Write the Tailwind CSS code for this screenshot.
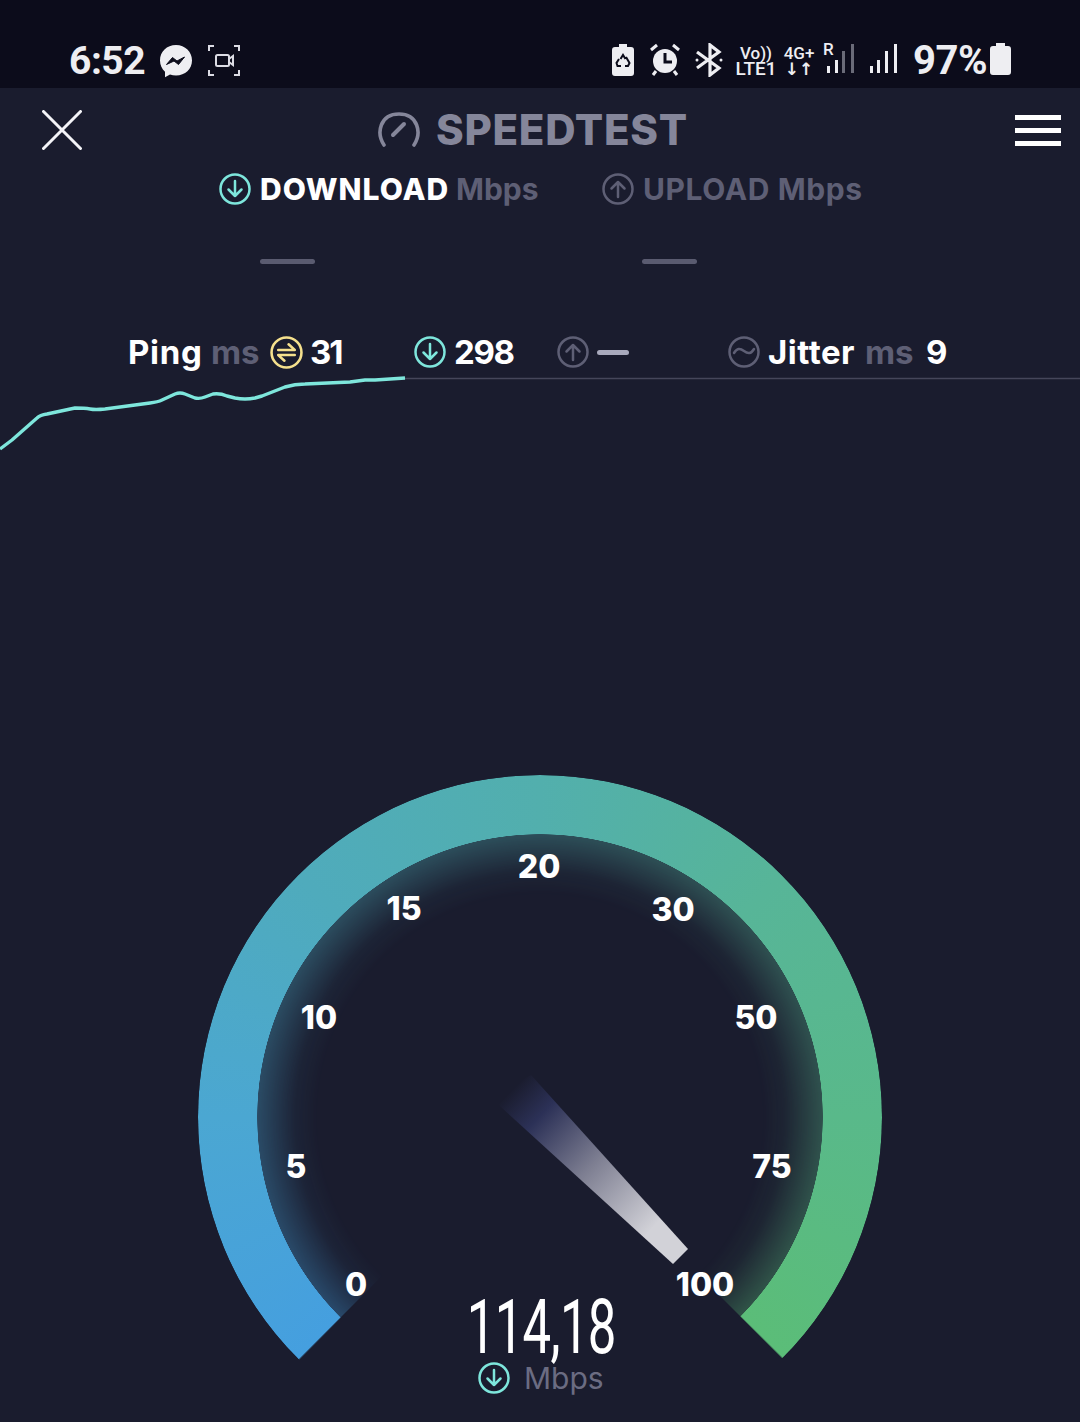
<!DOCTYPE html>
<html><head><meta charset="utf-8"><script src="https://cdn.jsdelivr.net/npm/@tailwindcss/browser@4"></script></head>
<body class="bg-[#1a1c2e]">
<div class="w-[1080px] h-[1422px] overflow-hidden bg-[#1a1c2e] font-['Inter','Liberation_Sans',sans-serif] text-white flex flex-col">
  <!-- status bar -->
  <div class="h-[88px] shrink-0 bg-[#0c0c1b] flex items-end pb-[5px] pl-[69px] text-[#eeeef2] font-['Roboto',sans-serif]">
    <span class="text-[39px] leading-[44px] font-bold w-[75px] whitespace-nowrap tracking-[-0.5px]">6:52</span>
    <svg class="ml-[14px] mb-[4px]" width="36" height="36" viewBox="0 0 36 36"><path d="M18 2C8.800 2 2 8.600 2 17.400c0 4.600 1.900 8.600 5 11.300v5.500l5-2.700c1.900.6 3.900.9 6 .9 9.200 0 16-6.600 16-15S27.200 2 18 2z" fill="#eeeef2"/><path d="M8.500 21.500 14.500 14.500 19 18 26.500 14 20.500 21.500 16 18z" fill="#0c0c1b" stroke="#0c0c1b" stroke-width="1"/></svg>
    <svg class="ml-[13px] mb-[6px]" width="34" height="33" viewBox="0 0 34 33" fill="none" stroke="#dcdce4" stroke-width="2"><path d="M2 7V2h5M27 2h5v5M32 26v5h-5M7 31H2v-5"/><rect x="9" y="11" width="13" height="11" rx="1.500"/><path d="M22 15l4-3v9l-4-3" /></svg>
    <svg class="ml-[370px] mb-[7px]" width="24" height="33" viewBox="0 0 24 33"><path d="M8 1h8v3h4a3 3 0 0 1 3 3v23a3 3 0 0 1-3 3H4a3 3 0 0 1-3-3V7a3 3 0 0 1 3-3h4z" fill="#eeeef2"/><path d="M9.500 16l2.500-4 2.500 4M15 14l3.500 6-1.500 3h-3M10 23H6.500L5.500 20l2.500-4" fill="none" stroke="#0c0c1b" stroke-width="2"/></svg>
    <svg class="ml-[13px] mb-[7px]" width="34" height="33" viewBox="0 0 34 33"><circle cx="17" cy="18" r="12" fill="#eeeef2"/><path d="M17 10v9h7" fill="none" stroke="#0c0c1b" stroke-width="3"/><path d="M3 7l6-5M31 7l-6-5M8 28l-3 4M26 28l3 4" stroke="#eeeef2" stroke-width="3" fill="none"/></svg>
    <svg class="ml-[12px] mb-[6px]" width="30" height="34" viewBox="0 0 30 34" fill="none" stroke="#eeeef2" stroke-width="3.200"><path d="M3 9l22 16-9 7V2l9 7L3 25"/><circle cx="3" cy="17" r="1.500" fill="#eeeef2" stroke="none"/><circle cx="27" cy="17" r="1.500" fill="#eeeef2" stroke="none"/></svg>
    <div class="ml-[11px] mb-[6px] w-[42px] flex flex-col items-center font-medium whitespace-nowrap"><span class="text-[17px] leading-[16px]">Vo))</span><span class="text-[19px] leading-[16px]">LTE1</span></div>
    <div class="ml-[5px] mb-[6px] w-[34px] flex flex-col items-center font-medium whitespace-nowrap"><span class="text-[17px] leading-[16px]">4G+</span><span class="text-[17px] leading-[16px] font-bold font-['DejaVu_Sans',sans-serif]">↓↑</span></div>
    <div class="relative ml-[7px] mb-[9px] w-[34px] h-[32px]">
      <span class="absolute left-0 top-0 text-[17px] leading-[15px] font-medium">R</span>
      <svg class="absolute left-0 top-0" width="34" height="32" viewBox="0 0 34 32"><rect x="4" y="24" width="3" height="7" fill="#eeeef2"/><rect x="12" y="18" width="3" height="13" fill="#eeeef2"/><rect x="19" y="9" width="3" height="22" fill="#6a6b78"/><rect x="28" y="2" width="3" height="29" fill="#6a6b78"/></svg>
    </div>
    <svg class="ml-[11px] mb-[9px]" width="30" height="32" viewBox="0 0 30 32" fill="#eeeef2"><rect x="2" y="24" width="3" height="7"/><rect x="9" y="18" width="3" height="13"/><rect x="17" y="9" width="3" height="22"/><rect x="26" y="2" width="3" height="29"/></svg>
    <span class="ml-[15px] text-[40px] leading-[44px] font-bold tracking-[-0.5px] whitespace-nowrap w-[76px]">97%</span>
    <svg class="mb-[7px]" width="23" height="34" viewBox="0 0 23 34"><path d="M7 1h9v3h3a3 3 0 0 1 3 3v23a3 3 0 0 1-3 3H4a3 3 0 0 1-3-3V7a3 3 0 0 1 3-3h3z" fill="#eeeef2"/></svg>
  </div>
  <!-- header -->
  <div class="h-[84px] shrink-0 flex items-center pl-[42px]">
    <svg width="40" height="40" viewBox="0 0 40 40" stroke="#f4f4f8" stroke-width="3" stroke-linecap="round" class="mb-[1px]"><path d="M1.500 1.500l37 37M38.500 1.500l-37 37"/></svg>
    <svg class="ml-[295px]" width="44" height="38" viewBox="0 0 44 38" fill="none" stroke="#85869a" stroke-width="3.600" stroke-linecap="round"><path d="M7 34C-1 22 3 3 22 3s23 19 15 31"/><path d="M16 24l11-11" stroke-width="4"/></svg>
    <span class="ml-[15px] w-[250px] text-[42px] leading-none font-extrabold text-[#85869a] tracking-[0.7px] whitespace-nowrap">SPEEDTEST</span>
    <div class="ml-[329px] w-[46px] flex flex-col gap-[8px]"><div class="h-[5px] bg-white"></div><div class="h-[5px] bg-white"></div><div class="h-[5px] bg-white"></div></div>
  </div>
  <!-- legend -->
  <div class="h-[34px] shrink-0 flex items-center pl-[219px] text-[30px] font-bold whitespace-nowrap">
    <svg width="32" height="32" viewBox="0 0 32 32" fill="none" stroke="#7ee6dc" stroke-width="2.500" stroke-linecap="round" stroke-linejoin="round"><circle cx="16" cy="16" r="14.500"/><path d="M16 8v15M9.500 16.500L16 23l6.500-6.500"/></svg>
    <span class="ml-[9px] font-extrabold text-white tracking-[1px] w-[196px]">DOWNLOAD</span>
    <span class="text-[#5e5f75] w-[146px]">Mbps</span>
    <svg width="32" height="32" viewBox="0 0 32 32" fill="none" stroke="#5e5f75" stroke-width="2.500" stroke-linecap="round" stroke-linejoin="round"><circle cx="16" cy="16" r="14.500"/><path d="M16 24V9M9.500 15.500L16 9l6.500 6.500"/></svg>
    <span class="ml-[9px] text-[#5e5f75] tracking-[0.6px]">UPLOAD Mbps</span>
  </div>
  <!-- dashes -->
  <div class="h-[5px] mt-[53px] shrink-0 flex pl-[260px] gap-[327px]"><div class="w-[55px] h-[5px] rounded-full bg-[#5a5b70]"></div><div class="w-[55px] h-[5px] rounded-full bg-[#5a5b70]"></div></div>
  <!-- stats -->
  <div class="h-[36px] mt-[70px] shrink-0 flex items-center pl-[128px] text-[33px] font-bold whitespace-nowrap">
    <span class="w-[83px] tracking-[0.7px] pt-[1px]">Ping</span>
    <span class="w-[59px] text-[#5e5f75] pt-[1px]">ms</span>
    <svg width="33" height="33" viewBox="0 0 32 32" fill="none" stroke="#f5e08d" stroke-width="2.500" stroke-linecap="round" stroke-linejoin="round"><circle cx="16" cy="16" r="14.500"/><path d="M8 13.500h16L18 8M24 18.500H8l6 5.500"/></svg>
    <span class="ml-[7px] w-[104px] tracking-[-2px] pt-[1px]">31</span>
    <svg width="32" height="32" viewBox="0 0 32 32" fill="none" stroke="#7ee6dc" stroke-width="2.500" stroke-linecap="round" stroke-linejoin="round"><circle cx="16" cy="16" r="14.500"/><path d="M16 8v15M9.500 16.500L16 23l6.500-6.500"/></svg>
    <span class="ml-[8px] w-[103px] tracking-[-1.300px] pt-[1px]">298</span>
    <svg width="32" height="32" viewBox="0 0 32 32" fill="none" stroke="#5e5f75" stroke-width="2.500" stroke-linecap="round" stroke-linejoin="round"><circle cx="16" cy="16" r="14.500"/><path d="M16 24V9M9.500 15.500L16 9l6.500 6.500"/></svg>
    <div class="ml-[8px] w-[32px] h-[5px] rounded-full bg-[#a9aabd]"></div>
    <svg class="ml-[99px]" width="32" height="32" viewBox="0 0 32 32" fill="none" stroke="#5e5f75" stroke-width="2.500" stroke-linecap="round"><circle cx="16" cy="16" r="14.500"/><path d="M6 17c3-5 6-5 10-2s7 3 10-2"/></svg>
    <span class="ml-[8px] w-[97px] tracking-[0.5px] pt-[1px]">Jitter</span>
    <span class="w-[61px] text-[#5e5f75] pt-[1px]">ms</span>
    <span class="pt-[1px]">9</span>
  </div>
  <!-- chart -->
  <svg class="shrink-0" width="1080" height="84" viewBox="0 370 1080 84" fill="none">
    <path d="M405 378.500H1080" stroke="#45465a" stroke-width="1.500"/>
    <path d="M0 449L12 440 37 418Q40 415 47 414L75 408Q85 408 90 409T105 409L150 403Q158 402 162 400L175 394Q180 392 185 394L195 398Q200 399 205 397L213 394Q220 393 227 396L235 398Q245 400 255 398L262 396 285 387Q295 384 305 384L350 382 365 380 375 380 405 378" stroke="#7ee6dc" stroke-width="3.400" stroke-linejoin="round"/>
  </svg>
  <!-- gauge -->
  <div class="relative shrink-0 mt-[316px] h-[652px] w-[1080px]">
    <div class="absolute left-[198px] top-[5px] w-[684px] h-[684px] rounded-full bg-[conic-gradient(from_225deg,#459fdf_0deg,#4ba7d2_45deg,#4fabbc_90deg,#52afad_135deg,#57b598_180deg,#59b98a_225deg,#5bbd78_269.700deg,transparent_270deg,transparent_359.700deg,#459fdf_360deg)] [mask-image:radial-gradient(circle_at_center,transparent_222px,rgba(0,0,0,0.06)_245px,rgba(0,0,0,0.34)_282.500px,black_283px)]"></div>
    <svg class="absolute left-0 top-0" width="1080" height="652" viewBox="0 770 1080 652" fill="none">
      <defs><linearGradient id="needle" gradientUnits="userSpaceOnUse" x1="510" y1="1092" x2="684" y2="1258"><stop offset="0" stop-color="#1a1c2e"/><stop offset="0.16" stop-color="#2c3157"/><stop offset="0.46" stop-color="#7e7f92"/><stop offset="0.82" stop-color="#d2d2d8"/><stop offset="1" stop-color="#d2d2d8"/></linearGradient></defs>
      <path d="M688 1249L673 1264 490 1097 531 1075Z" fill="url(#needle)"/>
    </svg>
    <span class="absolute left-[539px] top-[97px] -translate-x-1/2 -translate-y-1/2 text-[32px] leading-none font-extrabold">20</span>
    <span class="absolute left-[404px] top-[139px] -translate-x-1/2 -translate-y-1/2 text-[32px] leading-none font-extrabold">15</span>
    <span class="absolute left-[673px] top-[140px] -translate-x-1/2 -translate-y-1/2 text-[32px] leading-none font-extrabold">30</span>
    <span class="absolute left-[319px] top-[248px] -translate-x-1/2 -translate-y-1/2 text-[32px] leading-none font-extrabold">10</span>
    <span class="absolute left-[756px] top-[248px] -translate-x-1/2 -translate-y-1/2 text-[32px] leading-none font-extrabold">50</span>
    <span class="absolute left-[296px] top-[397px] -translate-x-1/2 -translate-y-1/2 text-[32px] leading-none font-extrabold">5</span>
    <span class="absolute left-[772px] top-[397px] -translate-x-1/2 -translate-y-1/2 text-[32px] leading-none font-extrabold">75</span>
    <span class="absolute left-[356px] top-[515px] -translate-x-1/2 -translate-y-1/2 text-[32px] leading-none font-extrabold">0</span>
    <span class="absolute left-[705px] top-[515px] -translate-x-1/2 -translate-y-1/2 text-[32px] leading-none font-extrabold">100</span>
    <div class="absolute left-[541px] top-[527px] w-[240px] -ml-[120px] h-[60px] flex justify-center"><span class="font-['Roboto',sans-serif] font-normal text-[76px] leading-[60px] scale-x-[0.67] whitespace-nowrap tracking-[-1px]">114,18</span></div>
    <div class="absolute left-[478px] top-[592px] flex items-center gap-[14px]">
      <svg width="32" height="32" viewBox="0 0 32 32" fill="none" stroke="#7ee6dc" stroke-width="2.500" stroke-linecap="round" stroke-linejoin="round"><circle cx="16" cy="16" r="14.500"/><path d="M16 8v15M9.500 16.500L16 23l6.500-6.500"/></svg>
      <span class="text-[30px] leading-[32px] text-[#6b6c82] font-normal">Mbps</span>
    </div>
  </div>
</div>
</body></html>
